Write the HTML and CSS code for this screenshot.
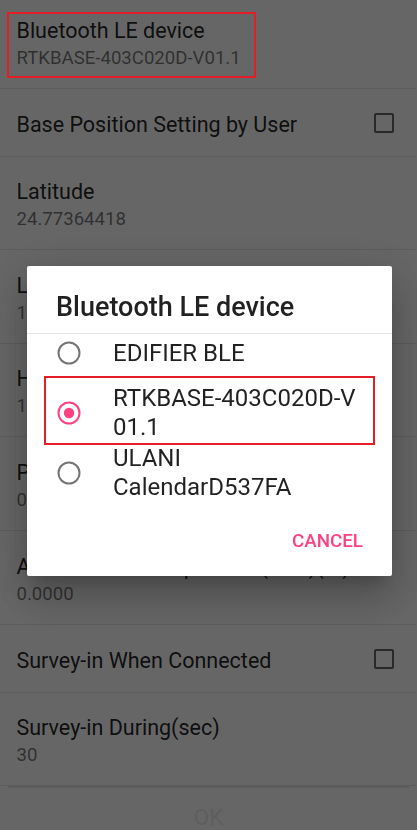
FILE: index.html
```html
<!DOCTYPE html>
<html>
<head>
<meta charset="utf-8">
<link rel="stylesheet" href="styles.css">
</head>
<body>
<div class="screen">
  <ul class="prefs">
    <li class="pref two">
      <div class="text">
        <div class="title">Bluetooth LE device</div>
        <div class="summary">RTKBASE-403C020D-V01.1</div>
      </div>
      <span class="mark mark-top"></span>
    </li>
    <li class="pref one">
      <div class="text"><div class="title">Base Position Setting by User</div></div>
      <span class="checkbox"></span>
    </li>
    <li class="pref two">
      <div class="text">
        <div class="title">Latitude</div>
        <div class="summary">24.77364418</div>
      </div>
    </li>
    <li class="pref two">
      <div class="text">
        <div class="title">Longitude</div>
        <div class="summary">121.01283752</div>
      </div>
    </li>
    <li class="pref two">
      <div class="text">
        <div class="title">Height</div>
        <div class="summary">125.3062</div>
      </div>
    </li>
    <li class="pref two">
      <div class="text">
        <div class="title">Position Accuracy Limit(m)</div>
        <div class="summary">0.0000</div>
      </div>
    </li>
    <li class="pref two">
      <div class="text">
        <div class="title">Antenna Center Up Offset(ARP)(m)</div>
        <div class="summary">0.0000</div>
      </div>
    </li>
    <li class="pref one">
      <div class="text"><div class="title">Survey-in When Connected</div></div>
      <span class="checkbox"></span>
    </li>
    <li class="pref two">
      <div class="text">
        <div class="title">Survey-in During(sec)</div>
        <div class="summary">30</div>
      </div>
    </li>
  </ul>
  <div class="okbar">
    <div class="okshadow"></div>
    <div class="ok">OK</div>
  </div>
</div>

<div class="scrim"></div>

<div class="dialog">
  <div class="dlg-title">Bluetooth LE device</div>
  <div class="dlg-list">
    <div class="items">
      <div class="item">
        <svg class="radio" width="24" height="24" viewBox="0 0 24 24"><circle cx="12" cy="12" r="10.5" fill="none" stroke="#757575" stroke-width="2"/></svg>
        <span class="label">EDIFIER BLE</span>
      </div>
      <div class="item">
        <svg class="radio" width="24" height="24" viewBox="0 0 24 24"><circle cx="12" cy="12" r="10.5" fill="none" stroke="#ff4081" stroke-width="2"/><circle cx="12" cy="12" r="5.2" fill="#ff4081"/></svg>
        <span class="label">RTKBASE-403C020D-V<br>01.1</span>
        <span class="mark mark-item"></span>
      </div>
      <div class="item">
        <svg class="radio" width="24" height="24" viewBox="0 0 24 24"><circle cx="12" cy="12" r="10.5" fill="none" stroke="#757575" stroke-width="2"/></svg>
        <span class="label">ULANI<br>CalendarD537FA</span>
      </div>
    </div>
  </div>
  <div class="actions">
    <span class="btn">CANCEL</span>
  </div>
</div>
</body>
</html>
```
FILE: styles.css
```css
html, body {
  margin: 0;
  padding: 0;
}
body {
  width: 417px;
  height: 830px;
  overflow: hidden;
  background: #ffffff;
  font-family: Roboto, "Noto Sans", sans-serif;
}
.screen {
  height: 830px;
  overflow: hidden;
}
.prefs {
  list-style: none;
  margin: -5px 0 0;
  padding: 0;
}
.pref {
  position: relative;
  display: flex;
  align-items: center;
  padding: 23px 23px 18px 16.5px;
  border-bottom: 1px solid #e6e6e6;
}
.pref.two {
  padding-top: 22.6px;
  padding-bottom: 16px;
}
.text {
  flex: 1;
  min-width: 0;
  white-space: nowrap;
}
.title {
  font-size: 21.5px;
  line-height: 26px;
  color: rgba(0, 0, 0, 0.87);
}
.summary {
  font-size: 18.6px;
  line-height: 28px;
  color: rgba(0, 0, 0, 0.54);
}
.checkbox {
  flex: none;
  width: 16px;
  height: 16px;
  border: 2px solid rgba(0, 0, 0, 0.6);
  border-radius: 2px;
  margin-top: -4px;
}
.mark {
  position: absolute;
  box-sizing: border-box;
  border: 2px solid #e51d26;
  z-index: 20;
}
.mark-top {
  left: 7px;
  top: 17px;
  width: 249px;
  height: 66px;
}
.okshadow {
  margin: 0 8px;
  height: 3px;
  background: linear-gradient(rgba(0, 0, 0, 0.14), rgba(0, 0, 0, 0));
}
.ok {
  margin-top: 15.3px;
  text-align: center;
  font-size: 22.5px;
  line-height: 26px;
  color: #ececec;
}
.scrim {
  position: fixed;
  left: 0;
  top: 0;
  right: 0;
  bottom: 0;
  background: rgba(0, 0, 0, 0.6);
  z-index: 5;
}
.dialog {
  position: fixed;
  left: 27px;
  top: 266px;
  width: 365px;
  height: 310px;
  background: #ffffff;
  border-radius: 2px;
  z-index: 6;
  box-shadow: 0 11px 15px -7px rgba(0, 0, 0, 0.2), 0 24px 38px 3px rgba(0, 0, 0, 0.14), 0 9px 46px 8px rgba(0, 0, 0, 0.12);
}
.dlg-title {
  padding: 24.8px 29px 10.2px;
  font-weight: 500;
  font-size: 27px;
  line-height: 32px;
  color: rgba(0, 0, 0, 0.87);
  border-bottom: 1px solid #e6e6e6;
}
.dlg-list {
  height: 169px;
  overflow: hidden;
}
.items {
  margin-top: -11px;
}
.item {
  position: relative;
  display: flex;
  align-items: center;
  height: 60px;
  padding-left: 30px;
}
.radio {
  flex: none;
  margin-left: -0.5px;
}
.label {
  margin-left: 32.5px;
  font-size: 24px;
  line-height: 28.5px;
  color: rgba(0, 0, 0, 0.87);
}
.mark-item {
  left: 17px;
  right: 17px;
  top: -7px;
  bottom: -2px;
}
.actions {
  display: flex;
  justify-content: flex-end;
  padding: 16.6px 29px 0;
}
.btn {
  font-weight: 500;
  font-size: 18.8px;
  line-height: 42px;
  color: #ff4081;
}
```
